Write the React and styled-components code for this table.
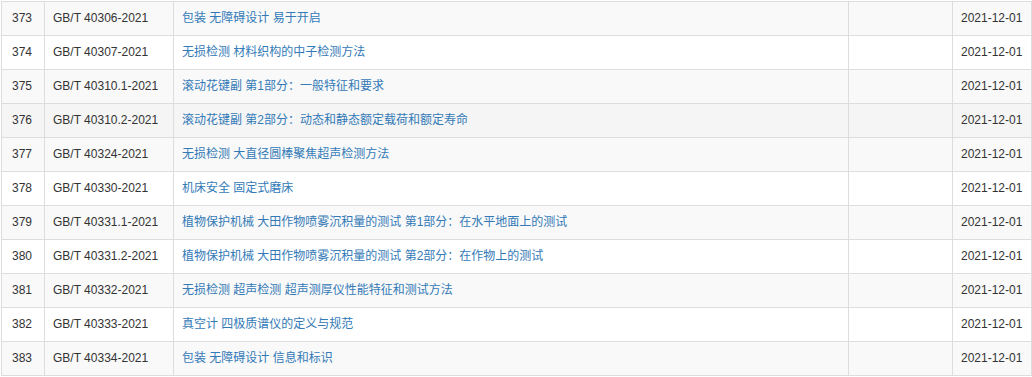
import React from 'react'
import styled, { createGlobalStyle } from 'styled-components'

const GlobalStyle = createGlobalStyle`
  html, body {
    margin: 0;
    padding: 0;
    background: #fff;
  }
  body {
    padding: 1px 0 0 1px;
    font-family: "Liberation Sans", Arial, "Noto Sans CJK SC", sans-serif;
    font-size: 12px;
    color: #333;
  }
`

const Table = styled.table`
  border-collapse: separate;
  border-spacing: 0;
  table-layout: fixed;
  width: 1031px;
  border-bottom: 1px solid #ddd;
`

const Col = styled.col`
  width: ${p => p.$w}px;
`

const Row = styled.tr`
  background: ${p => (p.$hover ? '#f5f5f5' : p.$striped ? '#f9f9f9' : '#fff')};
`

const Cell = styled.td`
  box-sizing: border-box;
  height: 34px;
  padding: 8px;
  line-height: 17px;
  border-top: 1px solid #ddd;
  border-left: 1px solid #ddd;
  vertical-align: top;
  white-space: nowrap;
  overflow: hidden;
  &:last-child {
    border-right: 1px solid #ddd;
  }
`

const NumCell = styled(Cell)`
  padding-left: 10px;
`

const Link = styled.a`
  color: #337ab7;
  text-decoration: none;
`

const widths = [43, 129, 675, 104, 80]

const rows = [
  ['373', 'GB/T 40306-2021', '包装 无障碍设计 易于开启'],
  ['374', 'GB/T 40307-2021', '无损检测 材料织构的中子检测方法'],
  ['375', 'GB/T 40310.1-2021', '滚动花键副 第1部分：一般特征和要求'],
  ['376', 'GB/T 40310.2-2021', '滚动花键副 第2部分：动态和静态额定载荷和额定寿命'],
  ['377', 'GB/T 40324-2021', '无损检测 大直径圆棒聚焦超声检测方法'],
  ['378', 'GB/T 40330-2021', '机床安全 固定式磨床'],
  ['379', 'GB/T 40331.1-2021', '植物保护机械 大田作物喷雾沉积量的测试 第1部分：在水平地面上的测试'],
  ['380', 'GB/T 40331.2-2021', '植物保护机械 大田作物喷雾沉积量的测试 第2部分：在作物上的测试'],
  ['381', 'GB/T 40332-2021', '无损检测 超声检测 超声测厚仪性能特征和测试方法'],
  ['382', 'GB/T 40333-2021', '真空计 四极质谱仪的定义与规范'],
  ['383', 'GB/T 40334-2021', '包装 无障碍设计 信息和标识'],
]

export default function App() {
  return (
    <>
      <GlobalStyle />
      <Table>
        <colgroup>
          {widths.map((w, i) => (
            <Col key={i} $w={w} />
          ))}
        </colgroup>
        <tbody>
          {rows.map((r, i) => (
            <Row key={r[0]} $striped={i % 2 === 0} $hover={r[0] === '376'}>
              <NumCell>{r[0]}</NumCell>
              <Cell>{r[1]}</Cell>
              <Cell>
                <Link href="#">{r[2]}</Link>
              </Cell>
              <Cell></Cell>
              <Cell>2021-12-01</Cell>
            </Row>
          ))}
        </tbody>
      </Table>
    </>
  )
}
